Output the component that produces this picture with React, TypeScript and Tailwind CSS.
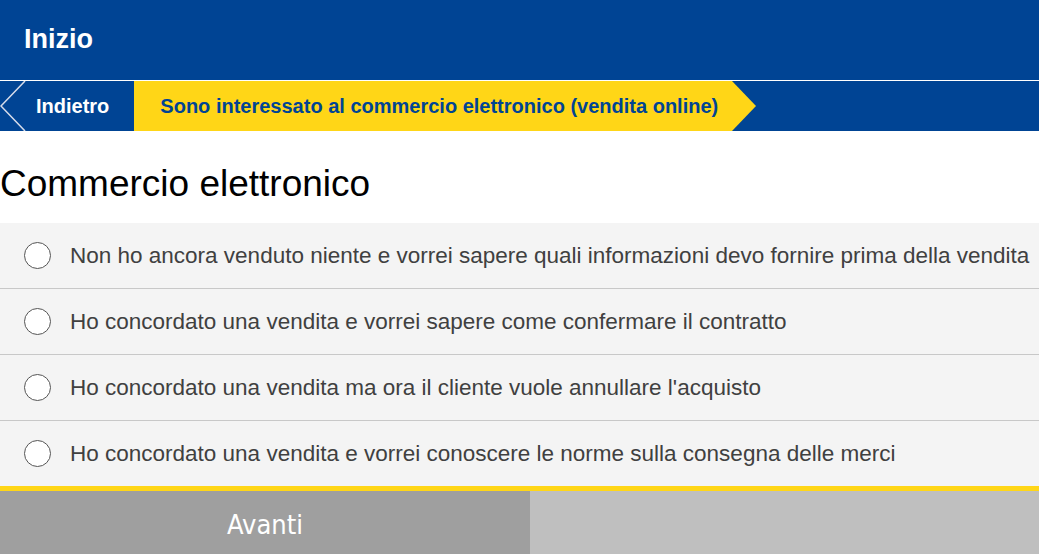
const options = [
  'Non ho ancora venduto niente e vorrei sapere quali informazioni devo fornire prima della vendita',
  'Ho concordato una vendita e vorrei sapere come confermare il contratto',
  "Ho concordato una vendita ma ora il cliente vuole annullare l'acquisto",
  'Ho concordato una vendita e vorrei conoscere le norme sulla consegna delle merci',
];

export default function App() {
  return (
    <div className="w-[1039px] h-[554px] overflow-hidden bg-white font-['Liberation_Sans',Arial,sans-serif]">
      {/* header */}
      <div className="h-[80px] bg-[#004494] flex items-center px-6">
        <h1 className="text-white font-bold text-[27px] leading-none -mt-[2px]">Inizio</h1>
      </div>
      <div className="h-px bg-white" />

      {/* breadcrumb */}
      <div className="h-[50px] bg-[#004494] flex items-stretch">
        <div className="relative flex items-center pl-[36px] pr-[25px]">
          <svg className="absolute left-0 top-0" width="26" height="50" viewBox="0 0 26 50">
            <path d="M25 0 L1 25 L25 50" fill="none" stroke="#d6dcea" strokeWidth="1.5" />
          </svg>
          <span className="text-white font-bold text-[20px]">Indietro</span>
        </div>
        <div className="relative flex items-center bg-[#ffd617] pl-[26px] pr-[14px]">
          <span className="text-[#004494] font-bold text-[20px] whitespace-nowrap">
            Sono interessato al commercio elettronico (vendita online)
          </span>
          <svg className="absolute left-full top-0" width="25" height="50" viewBox="0 0 25 50">
            <path d="M0 0 L24 25 L0 50 Z" fill="#ffd617" />
          </svg>
        </div>
      </div>

      {/* title */}
      <h2 className="text-[37px] text-black leading-none pt-[34px] pb-[21px]">Commercio elettronico</h2>

      {/* options */}
      <div>
        {options.map((o, i) => (
          <label
            key={i}
            className={`flex items-center bg-[#f4f4f4] pl-6 ${i < options.length - 1 ? 'h-[66px] border-b border-[#c8c8c8]' : 'h-[65px]'}`}
          >
            <span className="w-[27px] h-[27px] rounded-full border border-[#555] bg-white shrink-0" />
            <span className="ml-[19px] text-[22.5px] text-[#404040] whitespace-nowrap">{o}</span>
          </label>
        ))}
      </div>
      <div className="h-[5px] bg-[#ffd617]" />

      {/* footer buttons */}
      <div className="flex h-[69px]">
        <button className="w-[530px] bg-[#9f9f9f] text-white text-[27px] font-['DejaVu_Sans_Condensed',sans-serif]">
          Avanti
        </button>
        <div className="flex-1 bg-[#bfbfbf]" />
      </div>
    </div>
  );
}
